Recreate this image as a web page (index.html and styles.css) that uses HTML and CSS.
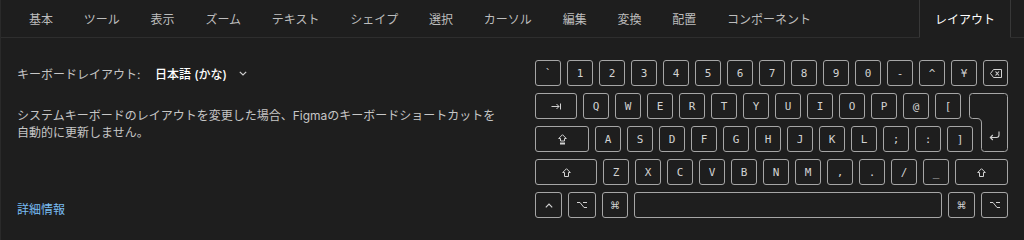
FILE: index.html
```html
<!DOCTYPE html>
<html lang="ja">
<head>
<meta charset="utf-8">
<title>キーボードショートカット</title>
<link rel="stylesheet" href="styles.css">
</head>
<body>
<div class="panel">
  <nav class="tabs">
    <div class="tab">基本</div>
    <div class="tab">ツール</div>
    <div class="tab">表示</div>
    <div class="tab">ズーム</div>
    <div class="tab">テキスト</div>
    <div class="tab">シェイプ</div>
    <div class="tab">選択</div>
    <div class="tab">カーソル</div>
    <div class="tab">編集</div>
    <div class="tab">変換</div>
    <div class="tab">配置</div>
    <div class="tab">コンポーネント</div>
    <div class="tab active">レイアウト</div>
  </nav>
  <main class="content">
    <section class="info">
      <div class="layout-row">
        <span class="label">キーボードレイアウト:</span>
        <span class="select">日本語 (かな)<svg class="chev" width="8" height="5" viewBox="0 0 8 5"><path d="M0.8 0.8 L4 4 L7.2 0.8" fill="none" stroke="currentColor" stroke-width="1.2"/></svg></span>
      </div>
      <p class="desc">システムキーボードのレイアウトを変更した場合、Figmaのキーボードショートカットを自動的に更新しません。</p>
      <a class="more">詳細情報</a>
    </section>
    <section class="kb">
      <div class="row">
        <div class="key">`</div>
        <div class="key">1</div>
        <div class="key">2</div>
        <div class="key">3</div>
        <div class="key">4</div>
        <div class="key">5</div>
        <div class="key">6</div>
        <div class="key">7</div>
        <div class="key">8</div>
        <div class="key">9</div>
        <div class="key">0</div>
        <div class="key">-</div>
        <div class="key">^</div>
        <div class="key">¥</div>
        <div class="key grow"><svg width="12" height="9" viewBox="0 0 12 9"><path d="M3.5 0.5 H11.5 V8.5 H3.5 L0.5 4.5 Z" fill="none" stroke="currentColor"/><path d="M5.5 2.5 L9 6.5 M9 2.5 L5.5 6.5" stroke="currentColor" stroke-width="1.1"/></svg></div>
      </div>
      <div class="mid">
        <div class="row r2">
          <div class="key w-tab"><svg width="10" height="7" viewBox="0 0 10 7"><path d="M0.5 3.5 H8 M5.5 1 L8 3.5 L5.5 6 M9.5 0.5 V6.5" fill="none" stroke="currentColor"/></svg></div>
          <div class="key">Q</div>
          <div class="key">W</div>
          <div class="key">E</div>
          <div class="key">R</div>
          <div class="key">T</div>
          <div class="key">Y</div>
          <div class="key">U</div>
          <div class="key">I</div>
          <div class="key">O</div>
          <div class="key">P</div>
          <div class="key">@</div>
          <div class="key">[</div>
        </div>
        <div class="row r3">
          <div class="key w-caps"><svg width="9" height="11" viewBox="0 0 9 11"><path d="M4.5 0.7 L8.3 4.5 H6.5 V7 H2.5 V4.5 H0.7 Z" fill="none" stroke="currentColor"/><rect x="2" y="8.5" width="5" height="2" fill="currentColor"/></svg></div>
          <div class="key">A</div>
          <div class="key">S</div>
          <div class="key">D</div>
          <div class="key">F</div>
          <div class="key">G</div>
          <div class="key">H</div>
          <div class="key">J</div>
          <div class="key">K</div>
          <div class="key">L</div>
          <div class="key">;</div>
          <div class="key">:</div>
          <div class="key">]</div>
        </div>
        <svg class="enter" width="39" height="59" viewBox="0 0 39 59">
          <path d="M3.5 0.5 H35.5 Q38.5 0.5 38.5 3.5 V55.5 Q38.5 58.5 35.5 58.5 H15.5 Q12.5 58.5 12.5 55.5 V30 Q12.5 25.5 8 25.5 H3.5 Q0.5 25.5 0.5 22.5 V3.5 Q0.5 0.5 3.5 0.5 Z" fill="none" stroke="#a6a6a6"/>
          <path d="M30 38.5 V42 Q30 44.5 27.5 44.5 H21.5 M23.8 42 L21.3 44.5 L23.8 47" fill="none" stroke="#d2d2d2" stroke-width="1.1"/>
        </svg>
      </div>
      <div class="row">
        <div class="key w-lshift"><svg width="9" height="9" viewBox="0 0 9 9"><path d="M4.5 0.7 L8.3 4.5 H6.5 V8.5 H2.5 V4.5 H0.7 Z" fill="none" stroke="currentColor"/></svg></div>
        <div class="key">Z</div>
        <div class="key">X</div>
        <div class="key">C</div>
        <div class="key">V</div>
        <div class="key">B</div>
        <div class="key">N</div>
        <div class="key">M</div>
        <div class="key">,</div>
        <div class="key">.</div>
        <div class="key">/</div>
        <div class="key">_</div>
        <div class="key grow"><svg width="9" height="9" viewBox="0 0 9 9"><path d="M4.5 0.7 L8.3 4.5 H6.5 V8.5 H2.5 V4.5 H0.7 Z" fill="none" stroke="currentColor"/></svg></div>
      </div>
      <div class="row">
        <div class="key w-27"><svg width="8" height="5" viewBox="0 0 8 5"><path d="M0.8 4.3 L4 1 L7.2 4.3" fill="none" stroke="currentColor" stroke-width="1.2"/></svg></div>
        <div class="key w-28"><svg width="10" height="8" viewBox="0 0 10 8"><path d="M0 1.5 H3 L7 6.5 H10 M6 1.5 H10" fill="none" stroke="currentColor"/></svg></div>
        <div class="key cmd">⌘</div>
        <div class="key grow"></div>
        <div class="key w-27 cmd">⌘</div>
        <div class="key w-27"><svg width="10" height="8" viewBox="0 0 10 8"><path d="M0 1.5 H3 L7 6.5 H10 M6 1.5 H10" fill="none" stroke="currentColor"/></svg></div>
      </div>
    </section>
  </main>
</div>
</body>
</html>
```

FILE: styles.css
```css
html, body {
  margin: 0;
  background: #1e1e1e;
}

body {
  width: 1024px;
  height: 240px;
  overflow: hidden;
  font-family: Inter, "Noto Sans CJK JP", sans-serif;
}

.panel {
  height: 240px;
  box-sizing: border-box;
  border-left: 1px solid #2a2a2a;
}

.tabs {
  display: flex;
  height: 37px;
  padding: 0 13px 0 12px;
  border-bottom: 1px solid #2e2e2e;
}

.tab {
  display: flex;
  align-items: center;
  padding: 0 15.4px;
  font-size: 12px;
  color: #bdbdbd;
  white-space: nowrap;
}

.tab:first-child {
  padding-left: 16px;
}

.tab.active {
  margin-left: auto;
  padding: 0 15px;
  color: #ffffff;
  border-left: 1px solid #383838;
  border-right: 1px solid #383838;
  margin-bottom: -1px;
  border-bottom: 1px solid #1e1e1e;
}

.content {
  display: flex;
  justify-content: space-between;
  padding: 22px 16px 0 16px;
}

.info {
  display: flex;
  flex-direction: column;
  width: 482px;
}

.layout-row {
  display: flex;
  align-items: center;
  height: 26px;
  font-size: 12px;
}

.label {
  width: 138px;
  color: #c6c6c6;
}

.select {
  display: flex;
  align-items: center;
  gap: 12px;
  color: #ffffff;
  font-weight: 500;
}

.chev {
  color: #cfcfcf;
}

.desc {
  margin: 21px 0 0;
  font-size: 12px;
  line-height: 17px;
  color: #c6c6c6;
}

.more {
  margin-top: auto;
  font-size: 12px;
  line-height: 17px;
  color: #79bdf3;
}

.kb {
  display: flex;
  flex-direction: column;
  gap: 7px;
  width: 473px;
}

.row {
  display: flex;
  gap: 6px;
  height: 26px;
}

.mid {
  display: grid;
  grid-template-columns: 1fr 12px 27px;
  grid-template-rows: 26px 26px;
  row-gap: 7px;
}

.r2 {
  grid-column: 1 / 2;
  grid-row: 1;
}

.r3 {
  grid-column: 1 / 3;
  grid-row: 2;
}

.enter {
  grid-column: 2 / 4;
  grid-row: 1 / 3;
  display: block;
}

.key {
  box-sizing: border-box;
  flex: none;
  width: 26px;
  height: 26px;
  border: 1px solid #a6a6a6;
  border-radius: 3px;
  display: flex;
  align-items: center;
  justify-content: center;
  color: #d2d2d2;
  font-family: "DejaVu Sans Mono", monospace;
  font-size: 11px;
}

.key svg {
  display: block;
}

.grow {
  flex: 1;
  width: auto;
}

.w-tab { width: 42px; }
.w-caps { width: 54px; }
.w-lshift { width: 62px; }
.w-27 { width: 27px; }
.w-28 { width: 28px; }

.cmd {
  font-family: "DejaVu Sans", sans-serif;
  font-size: 10px;
}
```
